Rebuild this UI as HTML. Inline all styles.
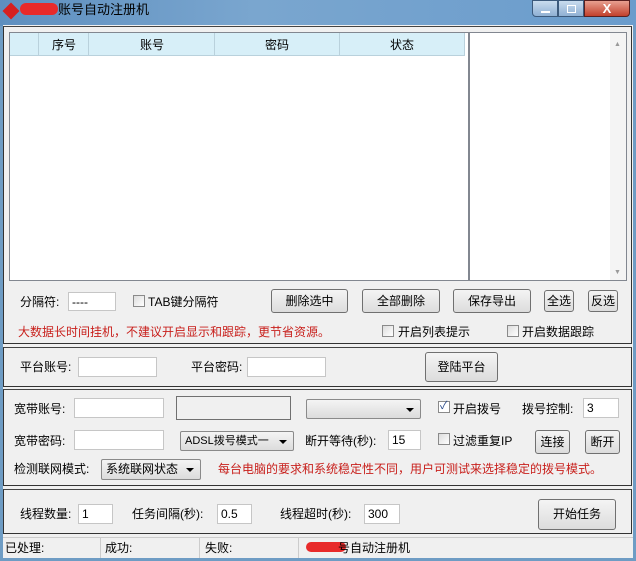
<!DOCTYPE html><html><head><meta charset="utf-8"><style>
*{box-sizing:border-box;margin:0;padding:0}
body{width:636px;height:561px;overflow:hidden;position:relative;background:#6e9cc4;font-family:"Liberation Sans","Noto Sans CJK SC","WenQuanYi Zen Hei",sans-serif;font-size:12px;color:#000}
.a{position:absolute}
.t{position:absolute;white-space:nowrap;line-height:14px}
.in{position:absolute;background:#fff;border:1px solid #c6c6c6;font-size:12px;padding:2px 3px;line-height:14px}
.btn{position:absolute;border:1px solid #707070;border-radius:3px;background:linear-gradient(#f4f4f4,#dcdcdc);text-align:center;font-size:12px}
.g{position:absolute;border:1px solid #333;border-top-color:#444}
.cb{position:absolute;width:12px;height:12px;border:1px solid #8a8a8a;background:linear-gradient(135deg,#ddd,#fff)}
.cmb{position:absolute;border:1px solid #8a8a8a;border-radius:2px;background:linear-gradient(#f4f4f4,#dcdcdc);font-size:12px;padding:2px 4px;line-height:14px}
.cmb:after{content:"";position:absolute;right:6px;top:8px;border:4px solid transparent;border-top:4px solid #000;border-bottom:0}
.red{color:#c8201c}
</style></head><body>
<div class="a" style="left:0;top:0;width:636px;height:26px;background:linear-gradient(90deg,#5e8fbf,#7aa6cf 40%,#6a9ccc)"></div>
<div class="a" style="left:5px;top:5px;width:12px;height:12px;background:#d62020;transform:rotate(45deg)"></div>
<div class="a" style="left:20px;top:3px;width:38px;height:12px;background:#e82a2a;border-radius:6px"></div>
<div class="t" style="left:58px;top:3px;font-size:13px">账号自动注册机</div>
<div class="a" style="left:532px;top:0;width:26px;height:17px;border:1px solid #3c5a7c;border-radius:0 0 0 4px;background:linear-gradient(#c9dcef,#8fb0d3)"><div class="a" style="left:8px;top:10px;width:9px;height:2px;background:#fff"></div></div>
<div class="a" style="left:558px;top:0;width:26px;height:17px;border:1px solid #3c5a7c;background:linear-gradient(#c9dcef,#8fb0d3)"><div class="a" style="left:8px;top:4px;width:9px;height:8px;border:1px solid #fff"></div></div>
<div class="a" style="left:584px;top:0;width:46px;height:17px;border:1px solid #5a2020;border-radius:0 0 4px 0;background:linear-gradient(#e8a090,#c2402c);color:#fff;font-weight:bold;text-align:center;font-size:13px;line-height:15px">X</div>
<div class="a" style="left:3px;top:25px;width:630px;height:533px;background:#f0f0f0"></div>

<div class="g" style="left:3px;top:26px;width:629px;height:318px"></div>
<div class="a" style="left:9px;top:32px;width:460px;height:249px;background:#fff;border:1px solid #828790"></div>
<div class="a" style="left:10px;top:33px;width:454px;height:23px;background:#d7eff8;border-bottom:1px solid #b9d1dc"></div>
<div class="a" style="left:38px;top:33px;width:1px;height:23px;background:#b9d1dc"></div>
<div class="a" style="left:88px;top:33px;width:1px;height:23px;background:#b9d1dc"></div>
<div class="a" style="left:214px;top:33px;width:1px;height:23px;background:#b9d1dc"></div>
<div class="a" style="left:339px;top:33px;width:1px;height:23px;background:#b9d1dc"></div>
<div class="a" style="left:464px;top:33px;width:1px;height:23px;background:#b9d1dc"></div>
<div class="t" style="left:52px;top:38px">序号</div>
<div class="t" style="left:140px;top:38px">账号</div>
<div class="t" style="left:265px;top:38px">密码</div>
<div class="t" style="left:390px;top:38px">状态</div>
<div class="a" style="left:469px;top:32px;width:158px;height:249px;background:#fff;border:1px solid #828790"></div>
<div class="a" style="left:610px;top:33px;width:16px;height:247px;background:#f4f4f4"></div>
<div class="t" style="left:614px;top:38px;font-size:7px;color:#999">▲</div>
<div class="t" style="left:614px;top:266px;font-size:7px;color:#999">▼</div>

<div class="t" style="left:20px;top:295px">分隔符:</div>
<div class="in" style="left:68px;top:292px;width:48px;height:19px">----</div>
<div class="cb" style="left:133px;top:295px"></div>
<div class="t" style="left:148px;top:295px">TAB键分隔符</div>
<div class="btn" style="left:271px;top:289px;width:77px;height:24px;line-height:22px">删除选中</div>
<div class="btn" style="left:362px;top:289px;width:78px;height:24px;line-height:22px">全部删除</div>
<div class="btn" style="left:453px;top:289px;width:78px;height:24px;line-height:22px">保存导出</div>
<div class="btn" style="left:544px;top:290px;width:30px;height:22px;line-height:20px">全选</div>
<div class="btn" style="left:588px;top:290px;width:30px;height:22px;line-height:20px">反选</div>
<div class="t red" style="left:18px;top:325px">大数据长时间挂机，不建议开启显示和跟踪，更节省资源。</div>
<div class="cb" style="left:382px;top:325px"></div>
<div class="t" style="left:398px;top:325px">开启列表提示</div>
<div class="cb" style="left:507px;top:325px"></div>
<div class="t" style="left:522px;top:325px">开启数据跟踪</div>

<div class="g" style="left:3px;top:347px;width:629px;height:40px"></div>
<div class="t" style="left:20px;top:360px">平台账号:</div>
<div class="in" style="left:78px;top:357px;width:79px;height:20px"></div>
<div class="t" style="left:191px;top:360px">平台密码:</div>
<div class="in" style="left:247px;top:357px;width:79px;height:20px"></div>
<div class="btn" style="left:425px;top:352px;width:73px;height:30px;line-height:28px">登陆平台</div>

<div class="g" style="left:3px;top:389px;width:629px;height:97px"></div>
<div class="t" style="left:14px;top:402px">宽带账号:</div>
<div class="in" style="left:74px;top:398px;width:90px;height:20px"></div>
<div class="a" style="left:176px;top:396px;width:115px;height:24px;border:1px solid #707070;background:#f0f0f0"></div>
<div class="cmb" style="left:306px;top:399px;width:115px;height:20px"></div>
<div class="cb" style="left:438px;top:401px;background:#fff"><div class="t" style="left:1px;top:-3px;font-size:11px;color:#2a4a8a">✓</div></div>
<div class="t" style="left:453px;top:402px">开启拨号</div>
<div class="t" style="left:522px;top:402px">拨号控制:</div>
<div class="in" style="left:583px;top:398px;width:36px;height:20px">3</div>

<div class="t" style="left:14px;top:434px">宽带密码:</div>
<div class="in" style="left:74px;top:430px;width:90px;height:20px"></div>
<div class="cmb" style="left:180px;top:431px;width:114px;height:20px;font-size:11px">ADSL拨号模式一</div>
<div class="t" style="left:305px;top:434px">断开等待(秒):</div>
<div class="in" style="left:388px;top:430px;width:33px;height:20px">15</div>
<div class="cb" style="left:438px;top:433px"></div>
<div class="t" style="left:453px;top:434px">过滤重复IP</div>
<div class="btn" style="left:535px;top:430px;width:35px;height:24px;line-height:22px">连接</div>
<div class="btn" style="left:585px;top:430px;width:35px;height:24px;line-height:22px">断开</div>

<div class="t" style="left:14px;top:462px">检测联网模式:</div>
<div class="cmb" style="left:101px;top:459px;width:100px;height:21px">系统联网状态</div>
<div class="t red" style="left:218px;top:462px">每台电脑的要求和系统稳定性不同，用户可测试来选择稳定的拨号模式。</div>

<div class="g" style="left:3px;top:489px;width:629px;height:45px"></div>
<div class="t" style="left:20px;top:507px">线程数量:</div>
<div class="in" style="left:78px;top:504px;width:35px;height:20px">1</div>
<div class="t" style="left:132px;top:507px">任务间隔(秒):</div>
<div class="in" style="left:217px;top:504px;width:35px;height:20px">0.5</div>
<div class="t" style="left:280px;top:507px">线程超时(秒):</div>
<div class="in" style="left:364px;top:504px;width:36px;height:20px">300</div>
<div class="btn" style="left:538px;top:499px;width:78px;height:31px;line-height:29px">开始任务</div>

<div class="a" style="left:3px;top:537px;width:630px;height:21px;background:#f0f0f0;border-top:1px solid #ccc"></div>
<div class="a" style="left:100px;top:538px;width:1px;height:20px;background:#ccc"></div>
<div class="a" style="left:199px;top:538px;width:1px;height:20px;background:#ccc"></div>
<div class="a" style="left:298px;top:538px;width:1px;height:20px;background:#ccc"></div>
<div class="t" style="left:5px;top:541px">已处理:</div>
<div class="t" style="left:105px;top:541px">成功:</div>
<div class="t" style="left:205px;top:541px">失败:</div>
<div class="a" style="left:306px;top:542px;width:40px;height:10px;background:#e82a2a;border-radius:5px"></div>
<div class="t" style="left:338px;top:541px">号自动注册机</div>
</body></html>
